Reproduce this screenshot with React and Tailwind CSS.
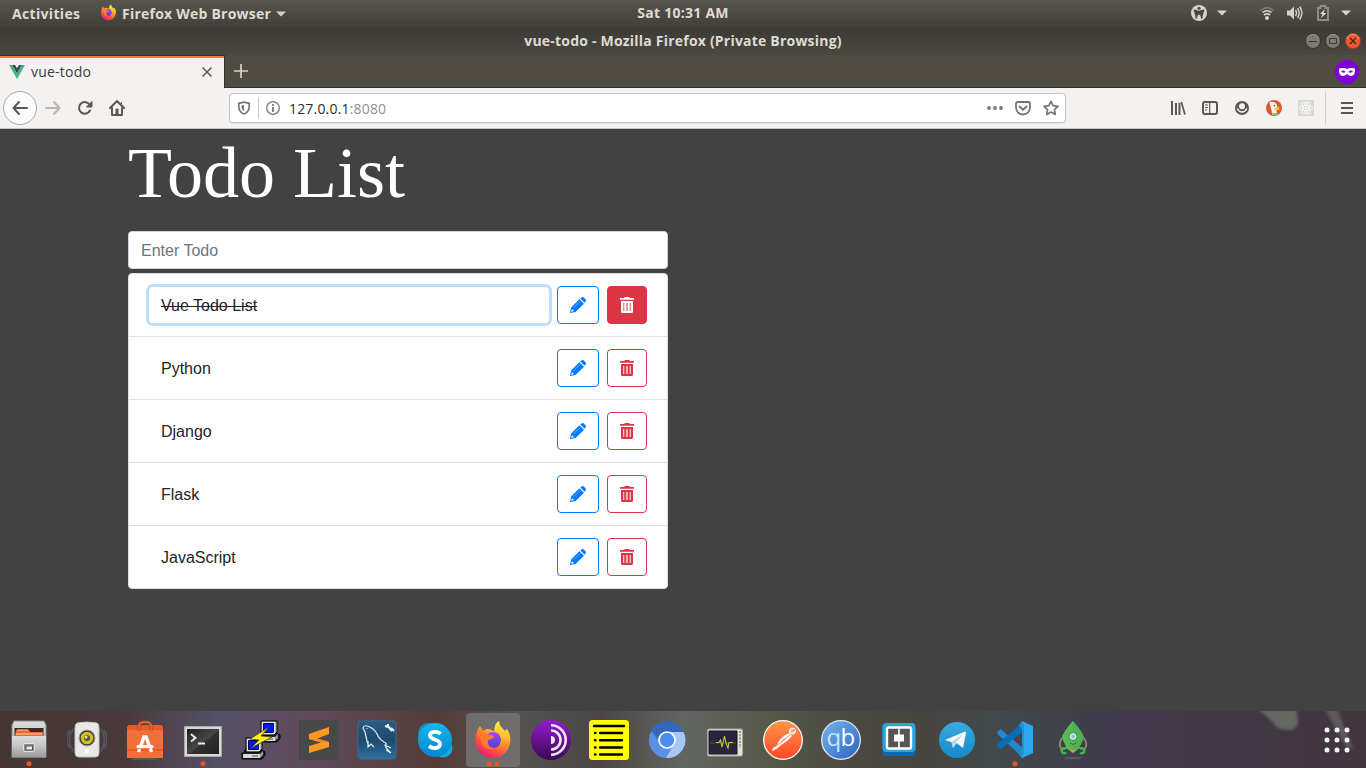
import React from "react";

const Svg = ({ w = 16, h = w, vb, className = "", children }) => (
  <svg width={w} height={h} viewBox={vb || `0 0 ${w} ${h}`} className={`block shrink-0 ${className}`} fill="none">
    {children}
  </svg>
);

const FirefoxLogo = ({ size }) => (
  <Svg w={size} vb="0 0 40 40">
    <defs>
      <linearGradient id="ffBody" x1="0.8" y1="0" x2="0.2" y2="1">
        <stop offset="0" stopColor="#fff04a" />
        <stop offset=".35" stopColor="#ffb02e" />
        <stop offset=".65" stopColor="#ff5a3c" />
        <stop offset="1" stopColor="#e8107c" />
      </linearGradient>
      <linearGradient id="ffGlobe" x1="0" y1="0" x2="0" y2="1">
        <stop offset="0" stopColor="#a14bf5" />
        <stop offset="1" stopColor="#4b42c8" />
      </linearGradient>
      <linearGradient id="ffTail" x1="0" y1="0" x2="0" y2="1">
        <stop offset="0" stopColor="#ffe93e" />
        <stop offset=".55" stopColor="#ffc22e" />
        <stop offset="1" stopColor="#ff6a35" />
      </linearGradient>
    </defs>
    <path d="M4 12C4.500 9 6 7.500 7 6L10 11C12 9 14 9 16 9L21 11L22 7C22 4 24 2 26 1C26 6 29 8 32 11L34 9C37 14 38 18 37 23C35 33 28 38 20 38C10 38 3 31 2.500 22C2.200 17 3 13 4 12Z" fill="url(#ffBody)" />
    <circle cx="20" cy="20" r="8" fill="url(#ffGlobe)" />
    <path d="M5 11C9 11 11 12 14 14L21 16C21 19 18 19 15 20C14 25 17 28 21 28C15 31 8 27 8 19C5 18 4 14 5 11Z" fill="#ff7a2a" />
    <path d="M26 1C22 4 21 8 22 11C26 12 28 15 28 19C28 24 26 27 22 29C31 31 37 26 37 20C36 15 35 12 34 9L33 12C30 9 26 6 26 1Z" fill="url(#ffTail)" />
  </Svg>
);

const VueLogo = () => (
  <Svg w={16} h={14}>
    <path d="M0 0H3.200L8 8.300L12.800 0H16L8 14Z" fill="#41b883" />
    <path d="M3.200 0H6L8 3.300L10 0H12.800L8 8.300Z" fill="#35495e" />
  </Svg>
);

const Caret = () => (
  <Svg w={10} h={6}><path d="M0 .5H10L5 5.500Z" fill="#d5d3cd" /></Svg>
);

function TopBar() {
  return (
    <div className="grid h-[27px] grid-cols-3 items-center bg-linear-to-b from-[#59564e] to-[#403f39] text-[14px] font-bold text-[#dfdbd2]">
      <div className="flex items-center pl-3">
        <span className="w-[88px] whitespace-nowrap tracking-[0.33px]">Activities</span>
        <div className="-mt-0.5"><FirefoxLogo size={17} /></div>
        <span className="ml-[5px] w-[150px] whitespace-nowrap tracking-[0.23px]">Firefox Web Browser</span>
        <div className="ml-1"><Caret /></div>
      </div>
      <div className="pb-0.5 text-center tracking-[0.27px]">Sat 10:31 AM</div>
      <div className="flex items-center justify-end pr-[15px] pb-px">
        <Svg w={16}>
          <circle cx="8" cy="8" r="8" fill="#d5d3cd" />
          <circle cx="8" cy="3.300" r="1.500" fill="#494740" />
          <path d="M2.800 5.300L6.500 6V9L5 13.500M13.200 5.300L9.500 6V9L11 13.500M6.500 6.500H9.500V9H6.500Z" stroke="#494740" strokeWidth="1.500" fill="#494740" />
        </Svg>
        <div className="ml-2.5"><Caret /></div>
        <Svg w={14} h={14} className="ml-[33px]">
          <path d="M.5 4.500Q7-1 13.500 4.500" stroke="#7e7c76" strokeWidth="1.500" />
          <path d="M2.500 6.500Q7 2.900 11.500 6.500M4 9Q7 6.700 10 9" stroke="#d5d3cd" strokeWidth="1.600" />
          <circle cx="7" cy="12" r="2" fill="#d5d3cd" />
        </Svg>
        <Svg w={16} h={14} className="ml-[13px]">
          <path d="M0 4.500H3L7 .5V13.500L3 9.500H0Z" fill="#d5d3cd" />
          <path d="M8.500 4Q10.500 7 8.500 10M10.700 2.200Q13.500 7 10.700 11.800M12.800.5Q17 7 12.800 13.500" stroke="#d5d3cd" strokeWidth="1.400" />
        </Svg>
        <Svg w={12} h={16} className="ml-[14px]">
          <path d="M1 3H3.500V1H8.500V3H11V15H1Z" stroke="#8f8d86" strokeWidth="2" />
          <path d="M8 4L3 9H5.500L4 13L9.500 8H6.500Z" fill="#dfdcd5" />
        </Svg>
        <div className="ml-3"><Caret /></div>
      </div>
    </div>
  );
}

function WindowButton({ close, children }) {
  return (
    <Svg w={16}>
      <circle cx="8" cy="8" r="7.500" fill={close ? "#e95b31" : "#7c7a72"} stroke={close ? "#a83e1e" : "#34332e"} />
      <path d="M2 6Q3 1.500 8 1.500T14 6" stroke={close ? "#f2916f" : "#94928b"} />
      {children}
    </Svg>
  );
}

function TitleBar() {
  return (
    <div className="grid h-7 grid-cols-[61px_1fr_61px] items-center bg-linear-to-b from-[#3b3a35] to-[#4b4841] text-[14px] font-bold text-[#dfdbd2]">
      <div />
      <div className="pb-0.5 text-center tracking-[0.21px]">vue-todo - Mozilla Firefox (Private Browsing)</div>
      <div className="flex gap-1">
        <WindowButton><path d="M4 8.500H12" stroke="#3c3b37" /></WindowButton>
        <WindowButton><path d="M4.500 5.500H11.500V10.500H4.500Z" stroke="#3c3b37" /></WindowButton>
        <WindowButton close><path d="M5 5L11 11M11 5L5 11" stroke="#4a2013" strokeWidth="1.300" /></WindowButton>
      </div>
    </div>
  );
}

function TabBar() {
  return (
    <div className="flex h-[33px] items-stretch border-b border-[#33322d] bg-[#504c44]">
      <div className="-mb-px flex w-[225px] items-center border-t border-r border-[#33322d] bg-[#f4f2f0] shadow-[inset_0_2px_0_#f0794d]">
        <div className="ml-[9px]"><VueLogo /></div>
        <span className="ml-1.5 w-[171px] pb-0.5 text-[14px] tracking-[0.22px] text-[#3c3c3c]">vue-todo</span>
        <Svg w={10}><path d="M.5 .5L9.500 9.500M9.500.5L.5 9.500" stroke="#5a5854" strokeWidth="1.500" /></Svg>
      </div>
      <div className="flex flex-1 items-center justify-between pr-[7px] pl-[9px]">
        <Svg w={14}><path d="M7 0V14M0 7H14" stroke="#d8d5ce" strokeWidth="1.700" /></Svg>
        <Svg w={24} className="translate-y-px">
          <circle cx="12" cy="12" r="12" fill="#8000d7" />
          <path fillRule="evenodd" d="M4 9Q5 7.500 8 8Q10 8 12 9Q14 8 16 8Q19 7.500 20 9Q20.500 16 16 16Q14 16 12 14Q10 16 8 16Q3.500 16 4 9ZM6 11.500Q8 13.500 10.500 12Q8.500 9.500 6 11.500ZM18 11.500Q15.500 9.500 13.500 12Q16 13.500 18 11.500Z" fill="#fff" />
        </Svg>
      </div>
    </div>
  );
}

function ToolBar() {
  return (
    <div className="flex h-[41px] items-center border-b border-[#c4c2c0] bg-[#f4f2f0]">
      <div className="ml-[3px] flex size-[34px] items-center justify-center rounded-full border border-[#aaa8a6] bg-[#fcfcfc]">
        <Svg w={16}><path d="M7 2L1.500 8L7 14M2 8H15" stroke="#5a5856" strokeWidth="2" strokeLinejoin="round" strokeLinecap="round" /></Svg>
      </div>
      <Svg w={16} className="ml-2"><path d="M9 2L14.500 8L9 14M14 8H1" stroke="#b9b7b5" strokeWidth="2" strokeLinejoin="round" strokeLinecap="round" /></Svg>
      <Svg w={16} className="ml-4">
        <path d="M13 10.500A5.800 5.800 0 1 1 12.500 4.500" stroke="#5a5856" strokeWidth="2" strokeLinecap="round" />
        <path d="M15 1.500V7H9.500Z" fill="#5a5856" stroke="#5a5856" strokeLinejoin="round" />
      </Svg>
      <Svg w={16} className="ml-4">
        <path d="M1 8L8 1L15 8M3 8V15H13V8" stroke="#5a5856" strokeWidth="2" strokeLinejoin="round" strokeLinecap="round" />
        <path d="M6.500 14V9.500Q6.500 8.500 8 8.500T9.500 9.500V14Z" fill="#5a5856" />
        <path d="M12 2H13V4H12Z" fill="#5a5856" />
      </Svg>
      <div className="ml-[104px] flex h-[30px] w-[837px] items-center rounded border border-[#c6c4c2] bg-white shadow-[0_1px_1px_#e3e1df]">
        <Svg w={14} className="ml-[7px]">
          <path d="M7 1C5 2 3 2 1.800 2.200V6Q2 11 7 13Q12 11 12.200 6V2.200C11 2 9 2 7 1Z" stroke="#777" strokeWidth="1.700" />
          <path d="M7 4L4.500 4.500V6.500Q5 9 7 10.300Z" fill="#777" />
        </Svg>
        <div className="ml-[7px] h-[22px] w-px bg-[#c8c8c8]" />
        <Svg w={14} className="ml-[7px]">
          <circle cx="7" cy="7" r="6.300" stroke="#777" strokeWidth="1.300" />
          <path d="M7 6V11M7 3V4.700" stroke="#777" strokeWidth="1.800" />
        </Svg>
        <span className="ml-[9px] w-[698px] text-[14px] tracking-[0.18px] text-[#2e2e2e]">127.0.0.1<span className="text-[#919191]">:8080</span></span>
        <Svg w={16}><g fill="#777"><circle cx="2" cy="8" r="1.900" /><circle cx="8" cy="8" r="1.900" /><circle cx="14" cy="8" r="1.900" /></g></Svg>
        <Svg w={16} className="ml-3">
          <path d="M2.500 2H13.500Q15 2 15 3.500V7.500Q14.500 14 8 14.500Q1.500 14 1 7.500V3.500Q1 2 2.500 2Z" stroke="#777" strokeWidth="1.800" />
          <path d="M4.500 6.500L8 9.800L11.500 6.500" stroke="#777" strokeWidth="2" strokeLinecap="round" strokeLinejoin="round" />
        </Svg>
        <Svg w={16} className="ml-3">
          <path d="M8 1.300L10.100 5.700L15 6.300L11.400 9.600L12.300 14.500L8 12.100L3.700 14.500L4.600 9.600L1 6.300L5.900 5.700Z" stroke="#777" strokeWidth="1.700" strokeLinejoin="round" />
        </Svg>
      </div>
      <div className="flex flex-1 items-center pl-[104px]">
        <Svg w={16}><path d="M2 1V15M6 3V15M9.500 3V15" stroke="#5a5856" strokeWidth="2" /><path d="M11.300 2L15 14.500" stroke="#5a5856" strokeWidth="1.700" /></Svg>
        <Svg w={16} className="ml-4">
          <rect x="1" y="2" width="14" height="12" rx="2" stroke="#5a5856" strokeWidth="2" />
          <path d="M7.700 2V14M3 5H6M3 7.500H6M3 10H5" stroke="#5a5856" strokeWidth="1.200" />
        </Svg>
        <Svg w={16} className="ml-4">
          <circle cx="8" cy="8" r="7" fill="#5a5856" />
          <circle cx="8" cy="6.300" r="3" fill="#f4f2f0" />
          <path d="M3.500 9Q5 12 8 12T12.500 9" stroke="#f4f2f0" strokeWidth="1.500" strokeLinecap="round" />
        </Svg>
        <Svg w={16} className="ml-4">
          <circle cx="8" cy="8" r="8" fill="#de5833" />
          <path d="M4 2Q8 1 10.500 4Q11.500 6 11 8Q9.500 10 11.500 14Q9 15.500 6.500 14.800L4.500 6Q3 4 4 2Z" fill="#f6f1ec" />
          <circle cx="8.500" cy="5.600" r=".8" fill="#354c69" />
          <path d="M8.500 8.500Q11 6.800 14 7.500Q12 8.500 13.800 9.500Q11 10.700 8.500 10Z" fill="#fdc92f" />
          <path d="M6.500 12.800L9 13.500L11.500 12.800V15L9 14.500L7 15Z" fill="#65bc46" />
        </Svg>
        <Svg w={16} className="ml-4">
          <rect width="16" height="16" fill="#dad9d7" />
          <g stroke="#f8f8f7" strokeWidth="1"><ellipse cx="8" cy="8" rx="6.500" ry="2.600" /><ellipse cx="8" cy="8" rx="6.500" ry="2.600" transform="rotate(60 8 8)" /><ellipse cx="8" cy="8" rx="6.500" ry="2.600" transform="rotate(120 8 8)" /></g>
          <circle cx="8" cy="8" r="1.300" fill="#f8f8f7" />
        </Svg>
        <div className="ml-[11px] h-[34px] w-px bg-[#d4d2d0]" />
        <Svg w={12} h={14} className="ml-[15px]"><path d="M0 2H12M0 7H12M0 12H12" stroke="#5a5856" strokeWidth="2" /></Svg>
      </div>
    </div>
  );
}

const Pencil = () => (
  <Svg w={16}>
    <path fillRule="evenodd" d="M0 16L1.100 10.500L9.400 2.200L14 6.700L5.500 15ZM1.600 12.800L1.300 14.700L3.200 14.400L3.600 13.300L2.600 12.400Z" fill="#007bff" />
    <path d="M3.800 10.700L10.300 4.200" stroke="#7dbcff" strokeWidth=".8" />
    <path d="M10.300 1.600L11.600 .4Q12.700-.5 13.800.5L15.500 2.300Q16.500 3.300 15.700 4.300L14.600 5.700Z" fill="#007bff" />
  </Svg>
);

const Trash = () => (
  <Svg w={16}>
    <path d="M1 1H5L6 0H10L11 1H15V2.700H1Z" fill="currentColor" />
    <path fillRule="evenodd" d="M2 4H14V14.500Q14 16 12.500 16H3.500Q2 16 2 14.500ZM4.200 6V14H5.200V6ZM7.400 6V14H8.600V6ZM10.800 6V14H11.800V6Z" fill="currentColor" />
    <path d="M4.200 6H5.200V14H4.200ZM7.400 6H8.600V14H7.400ZM10.800 6H11.800V14H10.800Z" fill="#f4b4a8" fillOpacity=".65" />
  </Svg>
);

const todos = [
  { title: "Vue Todo List", done: true },
  { title: "Python" },
  { title: "Django" },
  { title: "Flask" },
  { title: "JavaScript" },
];

function TodoPage() {
  return (
    <main className="h-[582px] bg-[#424242] pl-32 font-['Liberation_Sans',Arial,sans-serif] text-base">
      <h1 className="h-[102px] pt-px font-['Liberation_Serif',serif] text-[72px] leading-[86.4px] text-white">Todo List</h1>
      <div className="flex h-[38px] w-[540px] items-center rounded border border-[#ced4da] bg-white px-3 pt-0.5 text-[#6c757d]">Enter Todo</div>
      <ul className="mt-1 w-[540px] overflow-hidden rounded border border-[#dfdfdf] bg-white text-[#212529]">
        {todos.map((t, i) => (
          <li key={t.title} className={`flex items-center px-[19px] ${i < todos.length - 1 ? "h-[63px] border-b border-[#dfdfdf]" : "h-[62px]"}`}>
            <div className={`ml-px flex h-9 w-[400px] items-center rounded-sm px-3 pt-0.5 ${t.done ? "line-through shadow-[0_0_0_3px_#bfdeff]" : ""}`}>{t.title}</div>
            <button className="ml-2 flex h-[38px] w-[42px] items-center justify-center rounded border border-[#007bff]"><Pencil /></button>
            <button className={`ml-2 flex h-[38px] w-10 items-center justify-center rounded border border-[#dc3545] ${t.done ? "bg-[#dc3545] text-white" : "text-[#dc3545]"}`}><Trash /></button>
          </li>
        ))}
      </ul>
    </main>
  );
}

const Computer = ({ x, y }) => (
  <g transform={`translate(${x} ${y})`}>
    <path d="M0 15H2L3 12H20L23 14V17L20 21H0Z" fill="#222" stroke="#000" />
    <path d="M1 16H18V20H1Z" fill="#d8d8d8" /><path d="M18 16L21 13V17L18 20Z" fill="#999" /><path d="M10 18H16" stroke="#555" />
    <path d="M4 0H20V11L17 14H4Z" fill="#bbb" stroke="#000" />
    <path d="M5 1H18V13H5Z" fill="#e5e5e5" /><path d="M6.500 2.500H16.500V11.500H6.500Z" fill="#0018ee" stroke="#000060" />
  </g>
);

const dockIcons = [
  { id: "files", dots: 1, art: <>
    <defs><linearGradient id="cab" x1="0" y1="0" x2="0" y2="1"><stop stopColor="#ddd" /><stop offset=".45" stopColor="#c5c5c5" /><stop offset="1" stopColor="#989898" /></linearGradient></defs>
    <path d="M5 1H35L37 5V37H3V5Z" fill="url(#cab)" stroke="#8c8c8c" /><path d="M5.500 8H34.500V16H5.500Z" fill="#3a2a22" />
    <path d="M7 10H20L21 12H34V16H6Z" fill="#e96a32" /><path d="M8 10H19M7 14H33" stroke="#ffd1a4" strokeWidth="1.200" />
    <path d="M3 16H37V37.500H3Z" fill="url(#cab)" /><rect x="14.500" y="23.500" width="11" height="8" rx="1.500" fill="#888" stroke="#e2e2e2" /><path d="M17 26H23.500V30H17Z" fill="#eee" stroke="#555" /></> },
  { id: "sound", art: <>
    <path d="M6 9Q-1 20 6 31M34 9Q41 20 34 31M3 10Q-3 20 3 28M37 10Q43 20 37 28" stroke="#647da8" strokeOpacity=".4" strokeWidth="1.800" />
    <path d="M10 3Q20 1 30 3Q32 4 32 8V33Q32 37 28 37H12Q8 37 8 33V8Q8 4 10 3Z" fill="#e8e8e6" stroke="#c3c3c3" />
    <circle cx="20" cy="18" r="8" fill="#373737" stroke="#aaa" /><circle cx="20" cy="18" r="6.300" fill="#d2be14" /><circle cx="20" cy="18" r="3" fill="#575240" /><circle cx="19" cy="17" r="1.500" fill="#e5dfb0" /><circle cx="20" cy="31" r="2" fill="#fff" /></> },
  { id: "software", art: <>
    <ellipse cx="20" cy="39" rx="14" ry="1.500" fill="#5f6667" fillOpacity=".6" /><path d="M2 7L4 5H36L38 7V38H2Z" fill="#ef7038" /><path d="M2 7L4 5H36L38 7V10H2ZM2 29H38V31H2Z" fill="#e75b28" />
    <path d="M14 11V5Q15 2 20 2T26 5V11" stroke="#bc4020" strokeWidth="3" /><path d="M14 11V5Q15 2 20 2T26 5V11" stroke="#ed6640" strokeWidth="1.500" />
    <path d="M13.500 32L19 17H21L26.500 32" stroke="#fff" strokeWidth="3.500" /><path d="M13 26.500H27" stroke="#fff" strokeWidth="3" strokeLinecap="round" /><path d="M12 28.800H25" stroke="#ef7038" /></> },
  { id: "terminal", dots: 1, art: <>
    <defs><linearGradient id="term" x1="0" y1="0" x2="1" y2="1"><stop stopColor="#202020" /><stop offset=".5" stopColor="#464646" /><stop offset=".55" stopColor="#303030" /><stop offset="1" stopColor="#222" /></linearGradient></defs>
    <path d="M1.500 6.500H38.500V36.500H1.500Z" fill="#d8d8d5" stroke="#a8a8a8" /><path d="M4 9H36V34H4Z" fill="url(#term)" /><path d="M8 14L12.500 18L8 21.500M15 23.500H22" stroke="#eee" strokeWidth="2" /></> },
  { id: "putty", art: <><Computer x={16} y={1} /><Computer x={1} y={18} /><path d="M28 7L9 19L18 20L10 28L31 17L20 16Z" fill="#ffef1b" stroke="#4e4b00" strokeWidth=".8" /></> },
  { id: "sublime", art: <><rect width="40" height="40" rx="1.500" fill="#484848" /><path d="M10 14L30 7V14L18 18.500L30 22V27L10 33V26L22 22.500L10 19Z" fill="#ff9822" /><path d="M10 19L22 22.500L30 22L18 18.500Z" fill="#f08a1c" /></> },
  { id: "workbench", art: <>
    <defs><linearGradient id="wb" x1="0" y1="0" x2="0" y2="1"><stop stopColor="#2a5c82" /><stop offset=".5" stopColor="#1c4a6d" /><stop offset="1" stopColor="#2f6f9f" /></linearGradient></defs>
    <rect x="1" y="1" width="38" height="38" rx="3" fill="url(#wb)" stroke="#356d94" /><path d="M12 27L10 21L8 12L6 8Q7 5 10 6Q17 8 20 14Q22 19 27 22Q31 24 28 25Q29 29 34 33M11 21L11 27L14 24L17 27M28 25L34 28M29 30L34 33" stroke="#e2edf3" strokeWidth="1.200" /><circle cx="10" cy="8.500" r=".6" fill="#fff" /><path d="M30 5L35 11M28 6L31 7L31 4M34 8L37 11" stroke="#eee" strokeWidth="2.200" /></> },
  { id: "skype", art: <>
    <defs><linearGradient id="sky" x1="0" y1="0" x2="0" y2="1"><stop stopColor="#16b7ef" /><stop offset="1" stopColor="#0785d0" /></linearGradient></defs>
    <circle cx="13" cy="13" r="10" fill="#168cc5" /><circle cx="28" cy="28" r="9.500" fill="#17a6dd" /><circle cx="20" cy="20" r="17" fill="url(#sky)" />
    <path d="M25.500 14C23 11 15 11 15 15.500C15 20.500 25 18.500 25 24C25 29 17.500 29 14 26" stroke="#fff" strokeWidth="3.800" /></> },
  { id: "firefox", dots: 2, active: true },
  { id: "tor", art: <>
    <defs><linearGradient id="tor" x1="0" y1="0" x2="0" y2="1"><stop stopColor="#951bd0" /><stop offset="1" stopColor="#3b0853" /></linearGradient></defs>
    <circle cx="20" cy="20" r="20" fill="url(#tor)" /><path d="M20 5.300A14.700 14.700 0 0 1 20 34.700M20 10.500A9.500 9.500 0 0 1 20 29.500" stroke="#f1e5f5" strokeWidth="2.600" /><path d="M20 16A4 4 0 0 1 20 24Z" fill="#f1e5f5" /></> },
  { id: "notes", art: <><rect width="40" height="40" rx="3.500" fill="#ffff00" /><path d="M5 6H35M11 13H33M11 20.300H33M11 27.500H33M11 34.500H33M6 13H6.500M6 20.300H6.500M6 27.500H6.500M6 34.500H6.500" stroke="#000" strokeWidth="2.400" strokeLinecap="round" /></> },
  { id: "chromium", art: <>
    <circle cx="20" cy="20" r="18" fill="#5b91e5" /><path d="M4 11A18 18 0 0 1 36.500 12H20Q13 13 12 21Z" fill="#3568bd" /><path d="M20 12H36.500A18 18 0 0 1 19 38L27 24Z" fill="#a9c7f4" /><circle cx="20" cy="20" r="8" fill="#488cf1" stroke="#fff" strokeWidth="1.600" /></> },
  { id: "monitor", art: <>
    <rect x="2.500" y="9" width="35" height="27" rx="1.500" fill="#e4e2df" stroke="#aaa79f" /><path d="M4 11H32V34H4Z" fill="#29253a" stroke="#16131e" /><path d="M35 11V28" stroke="#8b8984" strokeWidth="1.600" strokeDasharray="2 1.300" /><path d="M5 23H31" stroke="#81703c" strokeOpacity=".6" /><path d="M11 22.500H14L15.500 20L17 27L19.500 16L21 23L23 28L24 22.500H28" stroke="#c9c64c" strokeWidth="1.100" /></> },
  { id: "postman", art: <>
    <defs><linearGradient id="post" x1="0" y1="0" x2="0" y2="1"><stop stopColor="#ff9746" /><stop offset="1" stopColor="#ff4728" /></linearGradient></defs>
    <circle cx="20" cy="20" r="19.300" fill="url(#post)" stroke="#fff" strokeWidth="1.300" /><path d="M9 31Q9 28 14 25Q17 17 26 13L29 16Q24 22 18 25Q13 30 9 31Z" fill="#fff" /><path d="M12 27L20 21L27 15M18 22L22 18" stroke="#fb7a45" strokeWidth=".8" /><circle cx="29.500" cy="11" r="3" fill="#f6d0c1" stroke="#fff" /><path d="M28 12L32 9" stroke="#ef7043" /></> },
  { id: "qbittorrent", art: <>
    <defs><linearGradient id="qb" x1="0" y1="0" x2="1" y2="1"><stop stopColor="#79b5ef" /><stop offset="1" stopColor="#2b62be" /></linearGradient></defs>
    <circle cx="20" cy="20" r="19.300" fill="url(#qb)" stroke="#dcecf8" strokeWidth="1.300" />
    <text x="5.500" y="26" fontFamily="Open Sans" fontSize="24" fill="#c6e6ff">q</text><text x="19.500" y="26" fontFamily="Open Sans" fontSize="24" fill="#fff">b</text></> },
  { id: "brackets", art: <>
    <rect x="3.500" y="4" width="33" height="32" rx="4" fill="#0c67af" /><rect x="3.500" y="3" width="33" height="29" rx="4" fill="#28a6df" /><rect x="8" y="7.500" width="24" height="21" rx="1.500" fill="#555" stroke="#fff" strokeWidth="2.400" />
    <path d="M15 14.500H25V21.500H15ZM19.200 9H20.800V28H19.200Z" fill="#fff" /></> },
  { id: "telegram", art: <>
    <defs><linearGradient id="tele" x1="0" y1="0" x2="0" y2="1"><stop stopColor="#37aadf" /><stop offset="1" stopColor="#158ac9" /></linearGradient></defs>
    <circle cx="20" cy="20" r="18" fill="url(#tele)" /><path d="M8 20L28 11.500Q29.500 11.500 29 13L26 28L19.500 23L16 28L14.500 22Z" fill="#f5f8fa" /><path d="M14.500 22L26 14.500L18 23.500L16 28Z" fill="#b8d0de" /></> },
  { id: "vscode", dots: 1, art: <>
    <path d="M2.500 11.500L5.500 9L31 31L28 38L2.500 14Z" fill="#2489ca" /><path d="M28 2L31 9L6 29L2.500 26.500V24Z" fill="#066eb6" /><path d="M27 1L38 6V33L27 38Z" fill="#2ba6f1" /><path d="M27 1L29 6V33L27 38L25 36L27 30V10L24 5Z" fill="#1f92dc" /></> },
  { id: "robomongo", art: <>
    <path d="M10 17Q4 24 9 30M30 17Q36 24 31 30" stroke="#9b8b6f" strokeWidth="1.800" /><path d="M12 27H28L20 33Z" fill="#b2a370" /><path d="M20 1Q29 11 31 17Q28 26 24 30H16Q12 26 9 17Q11 11 20 1Z" fill="#4eb152" /><path d="M20 1V30H16Q12 26 9 17Q11 11 20 1Z" fill="#57b856" />
    <circle cx="20" cy="16.500" r="4" fill="#d9eee9" stroke="#348c52" /><circle cx="20" cy="16.500" r="2" fill="#89c6b8" /><path d="M17 23Q20 26 23 23" stroke="#217b37" /><path d="M13 29A2.500 2.500 0 1 0 13 32.500M27 29A2.500 2.500 0 1 1 27 32.500" stroke="#3fb84f" strokeWidth="2.500" /><path d="M12 38H28" stroke="#6f736e" /></> },
];

function Dock() {
  return (
    <footer className="flex h-[57px] items-stretch justify-between bg-[linear-gradient(90deg,#443633_0%,#49393b_9%,#565067_16%,#604b5b_23%,#553c37_32%,#555350_38%,#4b4645_44%,#636562_50%,#575a49_56%,#4b4944_62%,#49443f_67%,#414a4c_73%,#41394b_82%,#42353e_100%)]">
      <div className="flex">
        {dockIcons.map((icon) => (
          <div key={icon.id} className="flex w-[58px] justify-center">
            <div className={`mt-[2px] flex h-[54px] w-[54px] flex-col items-center rounded pt-[7px] ${icon.active ? "bg-[#6f6e6d]" : ""}`}>
              {icon.active ? <FirefoxLogo size={40} /> : <Svg w={40}>{icon.art}</Svg>}
              <Svg w={16} h={6} className="mt-px">
                {icon.dots === 1 && <circle cx="8" cy="2.700" r="2.500" fill="#ed5527" />}
                {icon.dots === 2 && <><circle cx="4.300" cy="2.700" r="2.500" fill="#ed5527" /><circle cx="11.700" cy="2.700" r="2.500" fill="#ed5527" /></>}
              </Svg>
            </div>
          </div>
        ))}
      </div>
      <Svg w={120} h={57}>
        <defs><filter id="leafBlur"><feGaussianBlur stdDeviation="1.600" /></filter></defs>
        <g filter="url(#leafBlur)"><path d="M12-2H50Q56 17 45 19Q30 20 26 10Z" fill="#646760" /><path d="M79-2H91L107 38L101 37Z" fill="#5c5a5f" /></g>
        {[79, 89, 99].flatMap((x) => [19, 29, 39].map((y) => <circle key={`${x}-${y}`} cx={x + 2} cy={y} r="2.500" fill="#f4f4f4" />))}
      </Svg>
    </footer>
  );
}

export default function App() {
  return (
    <div className="h-[768px] w-[1366px] overflow-hidden font-['Open_Sans','Noto_Sans',sans-serif] leading-normal">
      <TopBar />
      <TitleBar />
      <TabBar />
      <ToolBar />
      <TodoPage />
      <Dock />
    </div>
  );
}
